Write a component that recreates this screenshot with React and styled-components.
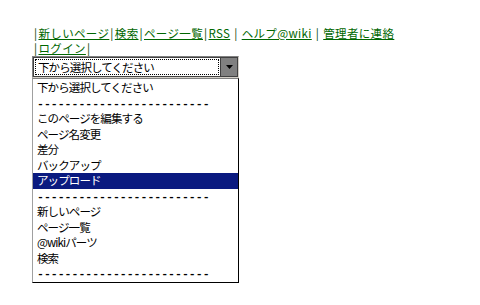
import React from "react";
import styled, { createGlobalStyle } from "styled-components";

const Global = createGlobalStyle`
  html, body { margin: 0; padding: 0; background: #ffffff; }
  body { font-family: "Noto Sans CJK JP", "Noto Sans", sans-serif; }
`;

const Page = styled.div`
  width: 480px;
  height: 305px;
  box-sizing: border-box;
  padding: 26px 0 0 33px;
  overflow: hidden;
`;

const Nav = styled.div`
  font-size: 11.5px;
  line-height: 15px;
  letter-spacing: 0.35px;
  color: #003300;
  white-space: nowrap;
`;

const NavLine = styled.div`
  display: block;
  height: 15px;
`;

const Link = styled.a`
  color: #006600;
  text-decoration: underline;
  text-underline-offset: 1px;
  cursor: pointer;
`;

const Pipe = styled.span`
  color: #004400;
  padding: ${(p) => (p.$spaced ? "0 4px" : "0 1px")};
`;

const Select = styled.div`
  margin: 0 0 0 -1px;
  width: 207px;
  height: 22px;
  box-sizing: border-box;
  border-style: solid;
  border-width: 1px;
  border-color: #808080 #d4d0c8 #d4d0c8 #808080;
  display: flex;
`;

const SelectInner = styled.div`
  flex: 1;
  display: flex;
  border: 1px solid #404040;
  background: #ffffff;
`;

const Field = styled.div`
  flex: 1;
  margin: 1px;
  border: 1px dotted #000;
  font-size: 11.5px;
  letter-spacing: -0.9px;
  line-height: 14px;
  padding-left: 2px;
  color: #000;
  white-space: nowrap;
  overflow: hidden;
`;

const ArrowButton = styled.div`
  width: 16px;
  background: #808080;
  border-left: 1px solid #404040;
  display: flex;
  align-items: center;
  justify-content: center;
`;

const List = styled.div`
  margin-left: -1px;
  width: 207px;
  box-sizing: border-box;
  border: 1px solid #000;
  border-top-color: #808080;
  border-left-color: #a0a0a0;
  background: #fff;
  padding: 1px 0 0 0;
`;

const Item = styled.div`
  height: 15.5px;
  line-height: 15.5px;
  font-size: 11.5px;
  letter-spacing: -0.9px;
  padding-left: 4px;
  white-space: nowrap;
  color: ${(p) => (p.$active ? "#ffffff" : "#000000")};
  background: ${(p) => (p.$active ? "#0a1a80" : "transparent")};
  font-family: ${(p) =>
    p.$dash ? '"Liberation Mono", monospace' : '"Noto Sans CJK JP", sans-serif'};
  ${(p) => p.$dash && "font-size: 11.5px; letter-spacing: 0; font-weight: bold;"}
`;

const DASH = "-------------------------";

const items = [
  { t: "下から選択してください" },
  { t: DASH, dash: true },
  { t: "このページを編集する" },
  { t: "ページ名変更" },
  { t: "差分" },
  { t: "バックアップ" },
  { t: "アップロード", active: true },
  { t: DASH, dash: true },
  { t: "新しいページ" },
  { t: "ページ一覧" },
  { t: "@wikiパーツ" },
  { t: "検索" },
  { t: DASH, dash: true },
];

export default function App() {
  return (
    <Page>
      <Global />
      <Nav>
        <NavLine>
          <Pipe>|</Pipe>
          <Link>新しいページ</Link>
          <Pipe>|</Pipe>
          <Link>検索</Link>
          <Pipe>|</Pipe>
          <Link>ページ一覧</Link>
          <Pipe>|</Pipe>
          <Link>RSS</Link>
          <Pipe $spaced>|</Pipe>
          <Link>ヘルプ@wiki</Link>
          <Pipe $spaced>|</Pipe>
          <Link>管理者に連絡</Link>
        </NavLine>
        <NavLine>
          <Pipe>|</Pipe>
          <Link>ログイン</Link>
          <Pipe>|</Pipe>
        </NavLine>
      </Nav>
      <Select>
        <SelectInner>
          <Field>下から選択してください</Field>
          <ArrowButton>
            <svg width="7" height="4" viewBox="0 0 7 4">
              <path d="M0 0H7L3.5 4Z" fill="#000" />
            </svg>
          </ArrowButton>
        </SelectInner>
      </Select>
      <List>
        {items.map((it, i) => (
          <Item key={i} $active={it.active} $dash={it.dash}>
            {it.t}
          </Item>
        ))}
      </List>
    </Page>
  );
}
